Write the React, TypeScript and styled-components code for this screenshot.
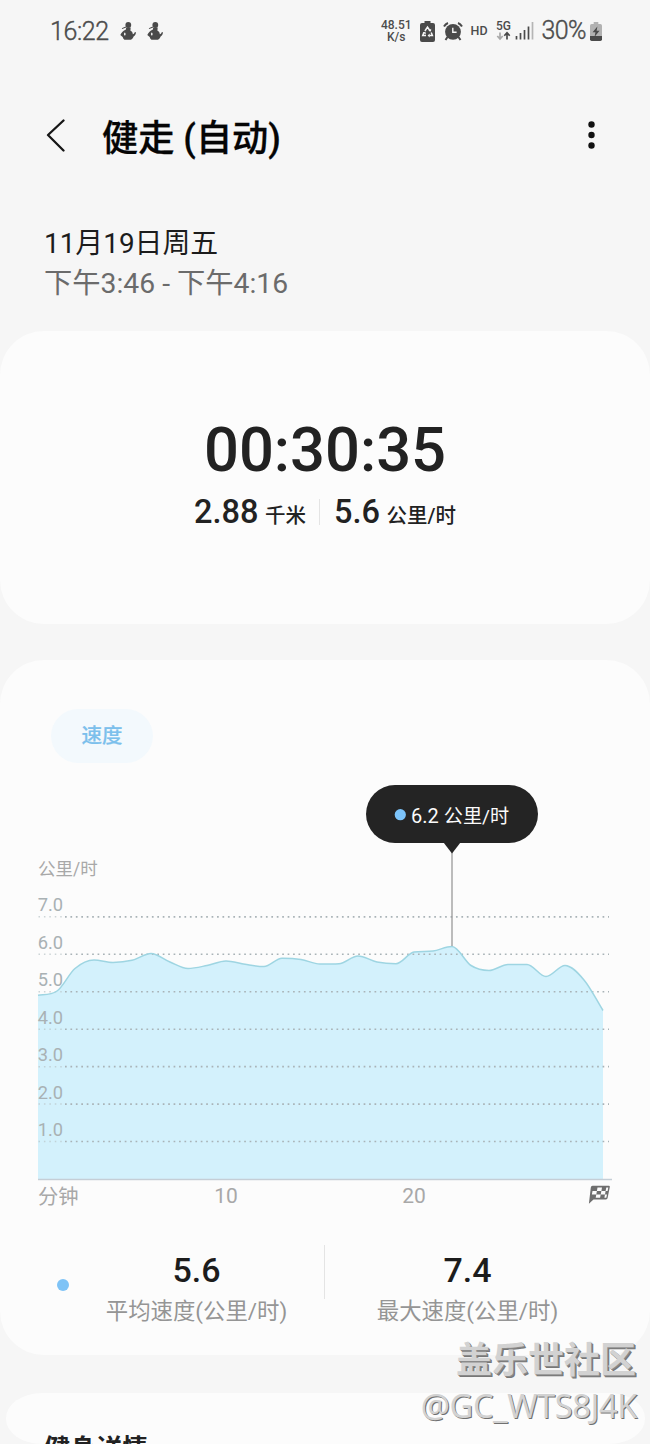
import React from "react";
import styled, { createGlobalStyle } from "styled-components";

const sans = `Roboto, "Noto Sans CJK SC", sans-serif`;

const GlobalStyle = createGlobalStyle`
  html, body { margin: 0; padding: 0; background: #f6f6f6; }
  body { font-family: ${sans}; color: #222; }
  * { box-sizing: border-box; }
`;

const Screen = styled.main`
  position: relative;
  width: 650px;
  height: 1444px;
  overflow: hidden;
  background: #f6f6f6;
  display: flex;
  flex-direction: column;
`;

const StatusBar = styled.header`
  flex: none;
  height: 62px;
  padding: 0 48px 0 50px;
  display: flex;
  align-items: center;
  justify-content: space-between;
  color: #4c4c4c;
`;

const StatusGroup = styled.div<{ $gap: number }>`
  display: flex;
  align-items: center;
  gap: ${(p) => p.$gap}px;
`;

const Clock = styled.span`
  font-size: 25px;
  line-height: 30px;
  font-weight: 300;
  padding-top: 2px;
  width: 59px;
  letter-spacing: -0.4px;
  -webkit-text-stroke: 0.4px #4c4c4c;
`;

const NetSpeed = styled.span`
  display: flex;
  flex-direction: column;
  align-items: center;
  font-size: 12px;
  line-height: 12px;
  font-weight: 500;
`;

const Hd = styled.span`
  font-size: 12.5px;
  font-weight: 500;
  padding-bottom: 2px;
`;

const Battery = styled.span`
  display: flex;
  align-items: center;
  gap: 4px;
  font-size: 25px;
  line-height: 30px;
  font-weight: 300;
  letter-spacing: -0.6px;
  -webkit-text-stroke: 0.4px #4c4c4c;
`;

const AppBar = styled.div`
  flex: none;
  height: 148px;
  padding: 0 54px 0 46px;
  display: flex;
  align-items: center;
`;

const Title = styled.h1`
  flex: 1;
  margin: 0 0 0 36px;
  padding-top: 5px;
  font-size: 36.2px;
  line-height: 48px;
  font-weight: 500;
  color: #050505;
  -webkit-text-stroke: 0.3px #050505;
`;

const Period = styled.section`
  flex: none;
  height: 121px;
  padding: 14px 44px 0;
`;

const PeriodLine = styled.p<{ $muted?: boolean; $size: number }>`
  margin: 0;
  font-size: ${(p) => p.$size}px;
  line-height: 40px;
  color: ${(p) => (p.$muted ? "#6b6b6b" : "#1c1c1c")};
`;

const Card = styled.section<{ $h: number }>`
  flex: none;
  height: ${(p) => p.$h}px;
  border-radius: 44px;
  background: #fcfcfc;
  margin-bottom: 36px;
  display: flex;
  flex-direction: column;
`;

const SummaryCard = styled(Card)`
  align-items: center;
  padding-top: 82px;
`;

const Duration = styled.div`
  font-size: 61.5px;
  line-height: 74px;
  font-weight: 500;
`;

const Metrics = styled.div`
  display: flex;
  align-items: center;
  margin-top: 2px;
`;

const Metric = styled.div`
  font-size: 32.5px;
  line-height: 46px;
  font-weight: 500;
`;

const Unit = styled.span`
  font-size: 20.5px;
  margin-left: 6.5px;
`;

const Divider = styled.i<{ $h: number; $m: string }>`
  width: 1px;
  height: ${(p) => p.$h}px;
  margin: ${(p) => p.$m};
  background: #e4e4e4;
`;

const Chip = styled.button`
  align-self: flex-start;
  width: 102px;
  height: 54px;
  margin: 49px 0 0 51px;
  padding: 1px 0 0;
  border: 0;
  border-radius: 27px;
  background: #f3f9fd;
  color: #7cc0ec;
  font: 500 20.5px/53px ${sans};
  -webkit-text-stroke: 0.2px #7cc0ec;
`;

const ChartArea = styled.svg`
  display: block;
  flex: none;
  margin-top: 7px;
  font-family: ${sans};
`;

const Stats = styled.div`
  display: flex;
  align-items: flex-start;
  padding: 21px 54px 0 57px;
`;

const Bullet = styled.i`
  width: 12px;
  height: 12px;
  margin-top: 38px;
  border-radius: 50%;
  background: #7ec3f6;
`;

const Stat = styled.div<{ $left: number; $w: number }>`
  width: ${(p) => p.$w}px;
  margin-left: ${(p) => p.$left}px;
  padding-top: 5px;
  display: flex;
  flex-direction: column;
  align-items: center;
`;

const StatValue = styled.div`
  font-size: 34px;
  line-height: 48px;
  font-weight: 500;
  color: #1c1c1c;
`;

const StatLabel = styled.div`
  font-size: 22.4px;
  line-height: 32px;
  margin-top: 1px;
  color: #959595;
  white-space: nowrap;
`;

const DetailsCard = styled.section`
  flex: none;
  height: 51px;
  margin: 2px 5px 0 6px;
  border-radius: 36px / 25px;
  background: #fcfcfc;
  padding: 37px 38px 0;
`;

const DetailsTitle = styled.h2`
  margin: 0;
  font-size: 26px;
  line-height: 38px;
  font-weight: 700;
`;

const Watermark = styled.div`
  position: absolute;
  right: 13px;
  bottom: 13px;
  text-align: right;
  color: #d2d2d2;
`;

const WatermarkName = styled.div`
  font: 700 36px/48px "Noto Sans CJK SC", sans-serif;
  margin-right: 1px;
  text-shadow: 1px 1px 0 #8a8a8a, 2px 2px 0 #777;
`;

const WatermarkUser = styled.div`
  font: 400 32.6px/50px "Noto Sans", sans-serif;
  letter-spacing: -0.4px;
  color: #d2d2d2;
  text-shadow: 1px 1px 0 #707070;
`;

const Figure = () => (
  <svg width="17" height="18" viewBox="0 0 17 18" fill="#4a4a4a">
    <circle cx="8.300" cy="3" r="2.900" />
    <path d="M6.300 5.500h4.200c.3 1.500 0 2.300-.2 3 1.700.8 2.400 2 2.500 3.700 1-.4 1.700-1.100 2.100-2.300l1 .3c0 2-.8 3.500-2.300 4.400-.5 1.600-1.400 2.600-2.800 3.100H4.400c-1-.8-1.500-1.700-1.700-2.700L.3 13c1.200-2.700 3-4.400 5.400-5.300z" />
    <path d="m1.800 6.200 3.900-1.700.5 1-4 1.600z" />
    <ellipse cx="4.800" cy="12" rx="0.800" ry="1.600" fill="#f6f6f6" />
  </svg>
);

const RecycleBattery = () => (
  <svg width="15" height="21" viewBox="0 0 15 21">
    <path d="M4.500 0h6v2H13a2 2 0 0 1 2 2v15a2 2 0 0 1-2 2H2a2 2 0 0 1-2-2V4a2 2 0 0 1 2-2h2.500z" fill="#4a4a4a" />
    <path d="m4.900 10 2.600-3.800 2.600 3.800M11.200 11.500l1.200 3.100H9.300M6 14.600H2.700l1.300-3.200" fill="none" stroke="#f6f6f6" strokeWidth="1.500" />
    <path d="m9.700 12.500-2.100 2.100 2.100 2zM2.700 11.600l2.700-.8.500 2.600zM8.500 9.800l2.500.6.200-2.600z" fill="#f6f6f6" />
  </svg>
);

const Alarm = () => (
  <svg width="20" height="19" viewBox="0 0 20 19" fill="none" stroke="#4a4a4a">
    <circle cx="10" cy="9.800" r="7.900" fill="#4a4a4a" stroke="none" />
    <path d="M1 4.600C2.100 2.700 3.300 1.600 5 1M19 4.600C17.900 2.700 16.700 1.600 15 1" strokeWidth="2" />
    <path d="m4.500 15-2 3M15.500 15l2 3" strokeWidth="2" />
    <path d="M9.800 5.800v4.500h3.800" stroke="#f6f6f6" strokeWidth="1.400" />
  </svg>
);

const Signal = () => (
  <svg width="38" height="22" viewBox="0 0 38 22">
    <text x="0" y="10" fontSize="12" fontWeight="500" fill="#4a4a4a" fontFamily="Roboto">5G</text>
    <path d="M4 12.500v6M1.300 16 4 19l2.700-3" fill="none" stroke="#a9a9a9" strokeWidth="1.700" />
    <path d="M11 19.500v-6M8.300 15.700 11 12.700l2.700 3" fill="none" stroke="#4a4a4a" strokeWidth="1.700" />
    <path d="M20.500 16v3.500M24.500 13v6.500M28.500 10v9.500M32.500 6.500v13" stroke="#4a4a4a" strokeWidth="1.700" />
    <path d="M36.500 2v17.500" stroke="#b5b5b5" strokeWidth="1.700" />
  </svg>
);

const ChargingBattery = () => (
  <svg width="12" height="19" viewBox="0 0 13 19" preserveAspectRatio="none">
    <path d="M4 0h5v2h2.200A1.800 1.800 0 0 1 13 3.800V14H0V3.800A1.800 1.800 0 0 1 1.800 2H4z" fill="#b2b2b2" />
    <path d="M0 14h13v3.200a1.800 1.800 0 0 1-1.800 1.800H1.800A1.800 1.800 0 0 1 0 17.200z" fill="#4a4a4a" />
    <path d="M8 4.500 2.800 10.300h3.100L5 14.800l5.300-6H7.200z" fill="#4a4a4a" />
  </svg>
);

const BackIcon = () => (
  <svg width="20" height="34" viewBox="0 0 20 34" fill="none" stroke="#161616" strokeWidth="2.300" strokeLinecap="round" strokeLinejoin="round">
    <path d="M17.500 1.500 2 16 17.500 31.500" />
  </svg>
);

const MoreIcon = () => (
  <svg width="10" height="30" viewBox="0 0 10 30" fill="#111">
    <circle cx="5.500" cy="3.500" r="3.200" />
    <circle cx="5.500" cy="14" r="3.200" />
    <circle cx="5.500" cy="24.500" r="3.200" />
  </svg>
);

type Point = [number, number];

const speed: Point[] = [
  [38, 995.3], [57, 991], [75, 968.5], [94, 960], [113, 962.4], [132, 960.3], [151, 953.5],
  [170, 962], [188, 968.5], [207, 965.5], [226, 961], [245, 964.3], [264, 966.5], [282, 958.3],
  [301, 959.5], [320, 964], [339, 963.7], [358, 956], [377, 962], [396, 963.8], [414, 952],
  [433, 951], [452, 946.5], [471, 965.5], [489, 970.5], [508, 964.4], [527, 964.4],
  [546, 976.5], [565, 965.5], [584, 980], [603, 1010.5],
];

/* Cubic path whose tangents are flat at local extremes. */
function smoothPath(pts: Point[]): string {
  const slope = pts.slice(1).map((p, i) => (p[1] - pts[i][1]) / (p[0] - pts[i][0]));
  const tan = pts.map((_, i) => {
    if (i === 0) return slope[0] * 0.6;
    if (i === pts.length - 1) return slope[i - 1];
    const a = slope[i - 1];
    const b = slope[i];
    if (a * b <= 0) return 0;
    return Math.sign(a) * Math.min(Math.abs(a + b) / 2, 3 * Math.abs(a), 3 * Math.abs(b));
  });
  return pts.slice(1).reduce((d, [x, y], i) => {
    const [px, py] = pts[i];
    const h = (x - px) / 3;
    return `${d}C${px + h} ${py + tan[i] * h} ${x - h} ${y - tan[i + 1] * h} ${x} ${y}`;
  }, `M${pts[0][0]} ${pts[0][1]}`);
}

const line = smoothPath(speed);
const levels = [7, 6, 5, 4, 3, 2, 1];
const levelY = (v: number) => 1179 - v * 37.45;

const SpeedChart = () => (
  <ChartArea width="650" height="450" viewBox="0 770 650 450">
    <path d={`${line}V1179H38Z`} fill="#d3f1fc" />
    {levels.map((v) => (
      <React.Fragment key={v}>
        <line x1="38.500" x2="64" y1={levelY(v)} y2={levelY(v)} stroke="#b9c4c8" strokeOpacity="0.7" strokeWidth="1.500" strokeDasharray="1.500 3.930" />
        <line x1="65" x2="609" y1={levelY(v)} y2={levelY(v)} stroke="#a9b3b7" strokeWidth="1.600" strokeDasharray="1.700 3.730" />
        <text x="37.700" y={levelY(v) - 5.400} fontSize="18.300" fill="#a9b1b4">{v.toFixed(1)}</text>
      </React.Fragment>
    ))}
    <path d={line} fill="none" stroke="#9ed5e2" strokeWidth="1.500" />
    <path d="M38 1179.500H612" stroke="#c5ced6" strokeWidth="1.500" />
    <text x="38" y="875" fontSize="17.500" fill="#a8a8a8">公里/时</text>
    <g fontSize="20.300" fill="#a8a8a8">
      <text x="38" y="1203.500">分钟</text>
      <text x="226" y="1203" textAnchor="middle" fontSize="21">10</text>
      <text x="414" y="1203" textAnchor="middle" fontSize="21">20</text>
    </g>
    <g>
      <path d="M592.500 1185.800h16.300q1.300 0 1 1.300l-2.200 11q-.3 1.400-1.600 1.400h-12.500l-4.600 4.300 1.900-16.400q.2-1.600 1.700-1.600z" fill="#6e6e6e" />
      <path d="M597.500 1187.500h4.500l-.6 3.500h-4.500zM606.300 1187.500h2l-.7 3.500h-2zM592.500 1191h4.400l-.6 3.500h-4.400zM601.400 1191h4.200l-.6 3.500h-4.300zM596.300 1194.500h4.400l-.6 3.300h-4.400zM605 1194.500h2l-.7 3.300h-1.900z" fill="#fcfcfc" />
    </g>
    <path d="M452 850V946" stroke="#9a9a9a" strokeWidth="1.300" />
    <rect x="366" y="785" width="172" height="58" rx="29" fill="#242424" />
    <path d="M443.500 842.500h17L452 853.500z" fill="#242424" />
    <circle cx="400.300" cy="814.700" r="5.600" fill="#7cc4fb" />
    <text x="411" y="822.500" fontSize="20" fill="#fafafa">6.2 <tspan fontSize="19.200">公里/时</tspan></text>
  </ChartArea>
);

export default function App() {
  return (
    <Screen>
      <GlobalStyle />
      <StatusBar>
        <StatusGroup $gap={10.5}>
          <Clock>16:22</Clock>
          <Figure />
          <Figure />
        </StatusGroup>
        <StatusGroup $gap={8}>
          <NetSpeed>
            <span>48.51</span>
            <span>K/s</span>
          </NetSpeed>
          <RecycleBattery />
          <Alarm />
          <Hd>HD</Hd>
          <Signal />
          <Battery>
            30%
            <ChargingBattery />
          </Battery>
        </StatusGroup>
      </StatusBar>
      <AppBar>
        <BackIcon />
        <Title>健走 (自动)</Title>
        <MoreIcon />
      </AppBar>
      <Period>
        <PeriodLine $size={27.9}>11月19日周五</PeriodLine>
        <PeriodLine $size={28.3} $muted>下午3:46 - 下午4:16</PeriodLine>
      </Period>
      <SummaryCard $h={293}>
        <Duration>00:30:35</Duration>
        <Metrics>
          <Metric>2.88<Unit>千米</Unit></Metric>
          <Divider $h={26} $m="0 14px 4px 13px" />
          <Metric>5.6<Unit>公里/时</Unit></Metric>
        </Metrics>
      </SummaryCard>
      <Card $h={695}>
        <Chip>速度</Chip>
        <SpeedChart />
        <Stats>
          <Bullet />
          <Stat $left={37} $w={181}>
            <StatValue>5.6</StatValue>
            <StatLabel>平均速度(公里/时)</StatLabel>
          </Stat>
          <Divider $h={54} $m="4px 0 0 37px" />
          <Stat $left={51} $w={183}>
            <StatValue>7.4</StatValue>
            <StatLabel>最大速度(公里/时)</StatLabel>
          </Stat>
        </Stats>
      </Card>
      <DetailsCard>
        <DetailsTitle>健身详情</DetailsTitle>
      </DetailsCard>
      <Watermark>
        <WatermarkName>盖乐世社区</WatermarkName>
        <WatermarkUser>@GC_WTS8J4K</WatermarkUser>
      </Watermark>
    </Screen>
  );
}
